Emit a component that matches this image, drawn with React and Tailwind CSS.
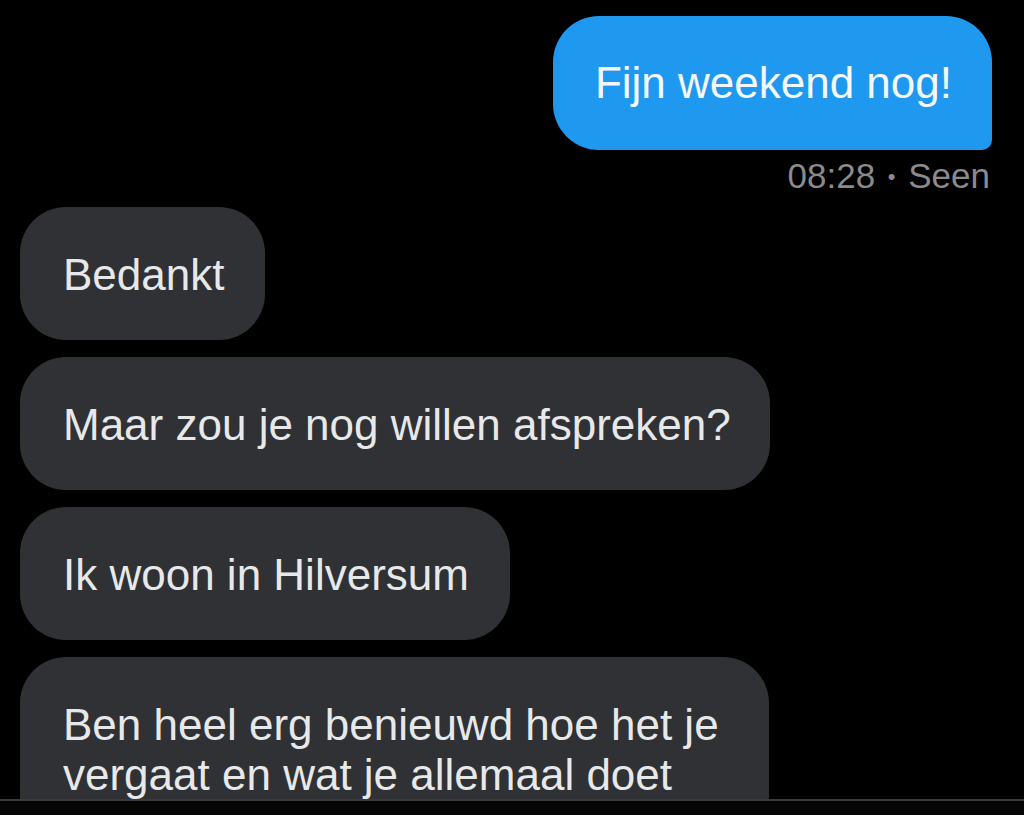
export default function App() {
  const font = { fontFamily: '"Liberation Sans", Arial, sans-serif' }

  return (
    <div className="w-[1024px] h-[815px] bg-black overflow-hidden flex flex-col" style={font}>
      <div className="h-[799px] overflow-hidden flex flex-col pt-[16px]">
        {/* outgoing */}
        <div className="flex justify-end pr-[32px]">
          <div className="bg-[#1f98f0] text-[#f4f9ff] text-[44px] leading-[50px] pl-[42px] pr-[40px] pt-[42px] pb-[42px] rounded-[46px] rounded-br-[10px]">
            Fijn weekend nog!
          </div>
        </div>
        <div className="flex justify-end pr-[34px] mt-[6px] h-[40px]">
          <span className="text-[35px] leading-[40px] text-[#8b8b8d]">
            08:28 <span className="text-[22px] leading-none align-[4px] px-[3px]">•</span> Seen
          </span>
        </div>

        {/* incoming */}
        <div className="flex flex-col items-start gap-[17px] pl-[20px] mt-[11px]">
          <div className="bg-[#2f3134] text-[#e7e8ea] text-[44px] leading-[50px] pl-[43px] pr-[41px] pt-[43px] pb-[40px] rounded-[46px]">
            Bedankt
          </div>
          <div className="bg-[#2f3134] text-[#e7e8ea] text-[44px] leading-[50px] pl-[43px] pr-[39px] pt-[43px] pb-[40px] rounded-[46px]">
            Maar zou je nog willen afspreken?
          </div>
          <div className="bg-[#2f3134] text-[#e7e8ea] text-[44px] leading-[50px] pl-[43px] pr-[41px] pt-[43px] pb-[40px] rounded-[46px]">
            Ik woon in Hilversum
          </div>
          <div className="bg-[#2f3134] text-[#e7e8ea] text-[44px] leading-[50px] pl-[43px] pr-[50px] pt-[43px] pb-[40px] rounded-[46px]">
            Ben heel erg benieuwd hoe het je
            <br />
            vergaat en wat je allemaal doet
          </div>
        </div>
      </div>
      <div className="h-[2px] bg-[#3a3b3e]" />
      <div className="flex-1 bg-[#050505]" />
    </div>
  )
}
